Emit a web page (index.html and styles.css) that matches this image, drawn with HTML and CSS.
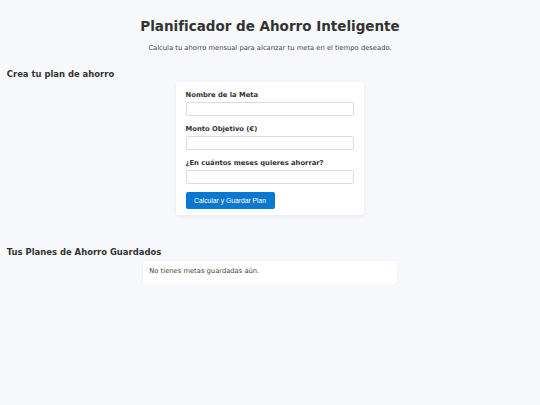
FILE: index.html
```html
<!DOCTYPE html>
<html lang="es">
<head>
    <meta charset="UTF-8">
    <meta name="viewport" content="width=device-width, initial-scale=1.0">
    <title>Planificador de Ahorro Inteligente</title>
    <link rel="stylesheet" href="styles.css">
</head>
<body>
    <header class="header">
        <h1>Planificador de Ahorro Inteligente</h1>
        <p class="subtitle">Calcula tu ahorro mensual para alcanzar tu meta en el tiempo deseado.</p>
    </header>

    <section class="section">
        <h2>Crea tu plan de ahorro</h2>
        <form id="plan-form" class="card">
            <div class="input-group">
                <label for="goal-name">Nombre de la Meta</label>
                <input type="text" id="goal-name">
            </div>
            <div class="input-group">
                <label for="goal-amount">Monto Objetivo (€)</label>
                <input type="number" id="goal-amount" min="0">
            </div>
            <div class="input-group">
                <label for="goal-months">¿En cuántos meses quieres ahorrar?</label>
                <input type="number" id="goal-months" min="1">
            </div>
            <button type="button" class="btn">Calcular y Guardar Plan</button>
        </form>
    </section>

    <section class="section saved">
        <h2>Tus Planes de Ahorro Guardados</h2>
        <div id="plans" class="plans">
            <p class="empty">No tienes metas guardadas aún.</p>
        </div>
    </section>
</body>
</html>
```

FILE: styles.css
```css
body {
    font-family: "DejaVu Sans", Verdana, sans-serif;
    font-size: 6.75px;
    color: #333;
    background-color: #f7f9fc;
    margin: 0;
    padding: 0 6.8px;
}

.header {
    text-align: center;
    padding-top: 18.2px;
}

h1 {
    font-size: 13.5px;
    font-weight: bold;
    color: #333;
    margin: 0 0 9.6px;
}

.subtitle {
    color: #444;
    margin: 0 0 17px;
}

h2 {
    font-size: 8.44px;
    font-weight: bold;
    color: #333;
    margin: 0 0 3.5px;
}

.card {
    box-sizing: border-box;
    width: 188px;
    margin: 0 auto;
    padding: 8.6px 9.6px 6.7px;
    background-color: #fff;
    border-radius: 3px;
    box-shadow: 0 1px 4px rgba(0, 0, 0, 0.08);
}

.input-group {
    margin-bottom: 8.4px;
}

.input-group:last-of-type {
    margin-bottom: 7.4px;
}

label {
    display: block;
    font-weight: bold;
    color: #333;
    margin-bottom: 2.9px;
}

input {
    display: block;
    box-sizing: border-box;
    width: 100%;
    height: 14.6px;
    padding: 0 4px;
    font-size: 6.75px;
    border: 1px solid #ddd;
    border-radius: 2px;
    background-color: #fff;
}

.btn {
    display: block;
    height: 17.3px;
    padding: 0 8.5px;
    font-family: "Liberation Sans", Arial, sans-serif;
    font-size: 6.75px;
    color: #fff;
    background-color: #0a78cf;
    border: none;
    border-radius: 2px;
    cursor: pointer;
}

.btn:hover {
    background-color: #0862a8;
}

.saved {
    margin-top: 31.3px;
}

.saved h2 {
    margin-bottom: 4px;
}

.plans {
    box-sizing: border-box;
    width: 254px;
    margin: 0 auto;
    padding: 6.3px 6.3px 8.8px;
    background-color: #fff;
    border-radius: 3px;
    box-shadow: 0 1px 4px rgba(0, 0, 0, 0.06);
}

.empty {
    margin: 0;
    color: #444;
}
```
